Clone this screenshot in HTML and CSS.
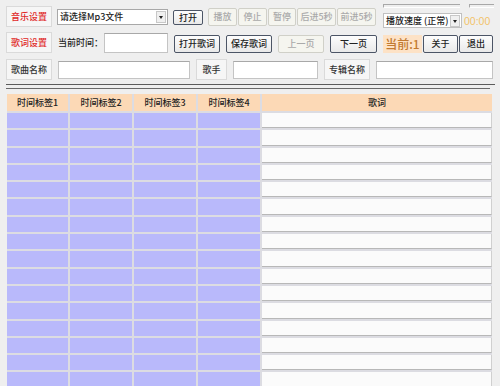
FILE: index.html
```html
<!DOCTYPE html>
<html lang="zh-CN">
<head>
<meta charset="utf-8">
<title>歌词编辑</title>
<link rel="stylesheet" href="styles.css">
</head>
<body>
<div class="app">
  <div class="row r1">
    <div class="lbl red wl">音乐设置</div>
    <div class="select sel-file"><span class="sel-text">请选择Mp3文件</span><span class="arrow"></span></div>
    <button class="btn w-open">打开</button>
    <div class="tight">
      <button class="btn dis w29">播放</button>
      <button class="btn dis w29">停止</button>
      <button class="btn dis w28">暂停</button>
      <button class="btn dis w39">后进5秒</button>
      <button class="btn dis w39">前进5秒</button>
    </div>
    <div class="rightblock">
      <div class="sliders">
        <div class="track long"></div>
        <div class="track short"></div>
      </div>
      <div class="speedrow">
        <div class="select sel-speed"><span class="sel-text">播放速度 (正常)</span><span class="arrow"></span></div>
        <span class="time">00:00</span>
      </div>
    </div>
  </div>

  <div class="row r2">
    <div class="lbl red wl">歌词设置</div>
    <span class="text w-cur">当前时间：</span>
    <div class="input w-in1"></div>
    <button class="btn w46">打开歌词</button>
    <button class="btn w46">保存歌词</button>
    <button class="btn dis w46">上一页</button>
    <button class="btn w47">下一页</button>
    <div class="tight">
      <div class="page">当前:1</div>
      <button class="btn w35">关于</button>
      <button class="btn w34">退出</button>
    </div>
  </div>

  <div class="row r3">
    <div class="lbl wl">歌曲名称</div>
    <div class="input w-song"></div>
    <div class="lbl w-singer">歌手</div>
    <div class="input w-singerin"></div>
    <div class="lbl wl">专辑名称</div>
    <div class="input w-album"></div>
  </div>

  <div class="sep1"></div>
  <div class="sep2"></div>

  <div class="grid">
    <div class="hd">时间标签1</div><div class="hd">时间标签2</div><div class="hd">时间标签3</div><div class="hd">时间标签4</div><div class="hd">歌词</div>
    <div class="c"></div><div class="c"></div><div class="c"></div><div class="c"></div><div class="ly"></div>
    <div class="c"></div><div class="c"></div><div class="c"></div><div class="c"></div><div class="ly"></div>
    <div class="c"></div><div class="c"></div><div class="c"></div><div class="c"></div><div class="ly"></div>
    <div class="c"></div><div class="c"></div><div class="c"></div><div class="c"></div><div class="ly"></div>
    <div class="c"></div><div class="c"></div><div class="c"></div><div class="c"></div><div class="ly"></div>
    <div class="c"></div><div class="c"></div><div class="c"></div><div class="c"></div><div class="ly"></div>
    <div class="c"></div><div class="c"></div><div class="c"></div><div class="c"></div><div class="ly"></div>
    <div class="c"></div><div class="c"></div><div class="c"></div><div class="c"></div><div class="ly"></div>
    <div class="c"></div><div class="c"></div><div class="c"></div><div class="c"></div><div class="ly"></div>
    <div class="c"></div><div class="c"></div><div class="c"></div><div class="c"></div><div class="ly"></div>
    <div class="c"></div><div class="c"></div><div class="c"></div><div class="c"></div><div class="ly"></div>
    <div class="c"></div><div class="c"></div><div class="c"></div><div class="c"></div><div class="ly"></div>
    <div class="c"></div><div class="c"></div><div class="c"></div><div class="c"></div><div class="ly"></div>
    <div class="c"></div><div class="c"></div><div class="c"></div><div class="c"></div><div class="ly"></div>
    <div class="c"></div><div class="c"></div><div class="c"></div><div class="c"></div><div class="ly"></div>
    <div class="c"></div><div class="c"></div><div class="c"></div><div class="c"></div><div class="ly"></div>
  </div>
</div>
</body>
</html>
```

FILE: styles.css
```css
* { box-sizing: border-box; }
html, body {
  margin: 0;
  padding: 0;
  width: 500px;
  height: 386px;
  overflow: hidden;
  background: #efefef;
  font-family: "Noto Sans CJK SC", "Noto Sans", sans-serif;
  font-size: 9px;
  font-weight: 500;
  color: #222;
}
.app {
  display: flex;
  flex-direction: column;
  padding-top: 6px;
}
.row {
  display: flex;
  align-items: center;
  height: 21px;
  padding-left: 6px;
  gap: 6px;
}
.r1 { gap: 5px; }
.r2 { margin-top: 5px; }
.r3 { margin-top: 6px; }

.lbl {
  height: 21px;
  border: 1px solid #dadada;
  background: #f6f6f6;
  display: flex;
  align-items: center;
  justify-content: center;
  color: #333;
  white-space: nowrap;
}
.lbl.red { color: #e02828; }
.wl { width: 46px; }
.w-singer { width: 31px; }

.select {
  height: 16px;
  background: #fff;
  border: 1px solid #a8a8a8;
  display: flex;
  align-items: center;
  justify-content: space-between;
  padding-left: 2px;
  white-space: nowrap;
}
.sel-file { width: 111px; }
.sel-speed { width: 79px; height: 15px; border-color: #c0c0c0; }
.arrow {
  width: 10px;
  height: 12px;
  margin-right: 1px;
  border: 1px solid #c8c8c8;
  background: #f0f0f0;
  position: relative;
}
.arrow::after {
  content: "";
  position: absolute;
  left: 2px;
  top: 4px;
  border-left: 2px solid transparent;
  border-right: 2px solid transparent;
  border-top: 3px solid #222;
}

.btn {
  height: 17px;
  padding: 0;
  border: 1px solid #4c5566;
  border-radius: 2px;
  background: linear-gradient(#fdfdfd, #e9e9e9);
  font: inherit;
  color: #222;
  display: flex;
  align-items: center;
  justify-content: center;
  white-space: nowrap;
}
.btn.dis {
  border-color: #d0d0c8;
  background: #f5f5ef;
  color: #aaa;
  height: 18px;
}
.w-open { width: 30px; height: 15px; margin-top: 1px; }
.w29 { width: 29px; }
.w28 { width: 28px; }
.w39 { width: 39px; }
.w46 { width: 46px; height: 18px; margin-top: 2px; }
.w47 { width: 47px; height: 18px; margin-top: 2px; }
.w35 { width: 35px; height: 18px; }
.w34 { width: 34px; height: 18px; }
.r2 .btn.dis { height: 18px; }

.tight {
  display: flex;
  align-items: center;
  gap: 1px;
}
.r2 .tight { margin-top: 2px; }

.rightblock {
  align-self: flex-start;
  margin-top: -4px;
  margin-left: 2px;
  display: flex;
  flex-direction: column;
  width: 112px;
}
.sliders {
  height: 8px;
  display: flex;
  gap: 9px;
  padding-top: 2px;
}
.track {
  height: 4px;
  border-top: 1px solid #a8a8a8;
  border-left: 1px solid #a8a8a8;
  border-bottom: 1px solid #fff;
}
.track.long { width: 77px; }
.track.short { width: 25px; }
.speedrow {
  display: flex;
  align-items: center;
  gap: 2px;
  margin-top: 3px;
}
.time {
  color: #f2c36a;
  font-family: "Liberation Sans", sans-serif;
  font-size: 10.5px;
  font-weight: 400;
}

.text { white-space: nowrap; }
.w-cur { width: 40px; }
.input {
  height: 20px;
  background: #fff;
  border: 1px solid #c4c4c4;
  border-top-color: #a8a8a8;
}
.w-in1 { width: 64px; }
.w-song { width: 132px; }
.w-singerin { width: 85px; }
.w-album { width: 117px; }
.r3 .input { height: 18px; }

.page {
  width: 39px;
  height: 18px;
  background: #fde2c6;
  color: #c27a30;
  font-size: 12px;
  display: flex;
  align-items: center;
  justify-content: center;
  white-space: nowrap;
}

.sep1 {
  margin: 4px 0 0 6px;
  width: 489px;
  height: 1px;
  background: #5c5c5c;
}
.sep2 {
  margin: 3px 0 0 6px;
  width: 484px;
  height: 1px;
  background: #6a6a6a;
}

.grid {
  margin: 5px 0 0 7px;
  width: 485px;
  display: grid;
  grid-template-columns: 61px 62px 62px 62px 1fr;
  grid-auto-rows: 15.3px;
  grid-template-rows: 17px;
  gap: 2px;
  background: #dcdce2;
}
.hd {
  background: #fcd9b6;
  display: flex;
  align-items: center;
  justify-content: center;
  color: #222;
  white-space: nowrap;
}
.c { background: #b9b9fb; }
.ly {
  background: #fbfbfb;
  border-bottom: 1px solid #b8b8b8;
  border-right: 1px solid #d0d0d0;
}
```
